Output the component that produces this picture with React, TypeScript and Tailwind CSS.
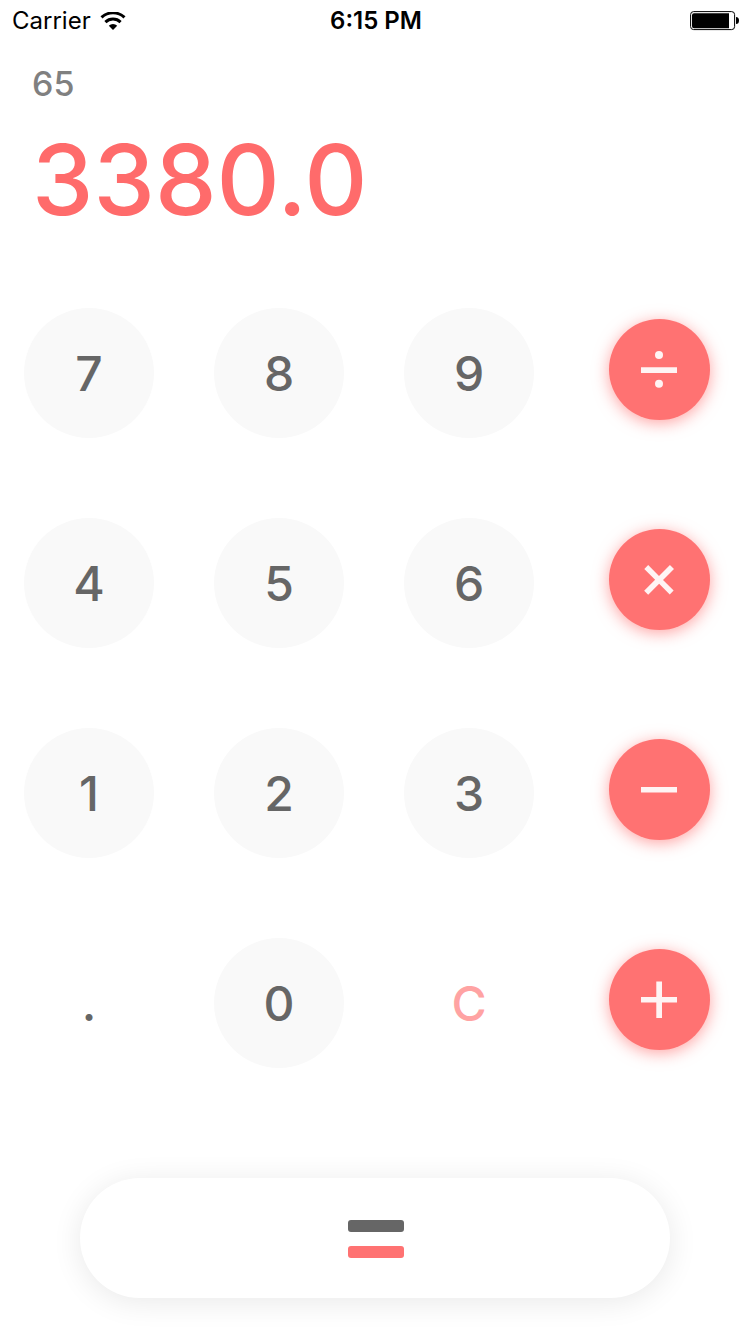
import type { ReactNode } from "react";

function Digit({ value }: { value: string }) {
  return (
    <button className="flex size-[130px] items-center justify-center rounded-full bg-[#f9f9f9] pt-0.5 text-5xl font-medium text-[#666]">
      {value}
    </button>
  );
}

function Operator({ label, children }: { label: string; children: ReactNode }) {
  return (
    <div className="flex justify-center pt-[11px]">
      <button
        aria-label={label}
        className="flex size-[101px] items-center justify-center rounded-full bg-[#ff7272] text-[#fff4f4] shadow-[0_3px_16px_rgba(255,114,114,0.65)]"
      >
        <svg className="size-10" viewBox="0 0 40 40" fill="currentColor" aria-hidden="true">
          {children}
        </svg>
      </button>
    </div>
  );
}

function StatusBar() {
  return (
    <header className="grid h-[42px] grid-cols-3 items-center pr-[10px] pl-3 text-2xl text-black">
      <div className="flex items-center gap-[9px]">
        <span>Carrier</span>
        <svg className="h-[18px] w-[26px]" viewBox="0 0 26 18" fill="none" stroke="currentColor" strokeWidth="3" aria-hidden="true">
          <path d="M1.5 5.4a16.8 16.8 0 0 1 23 0" />
          <path d="M5.4 10.1a11 11 0 0 1 15.2 0" />
          <path d="M13 18l-4.2-4.2a6 6 0 0 1 8.4 0z" fill="currentColor" stroke="none" />
        </svg>
      </div>
      <span className="text-center font-semibold">6:15 PM</span>
      <svg className="h-5 w-[50px] justify-self-end" viewBox="0 0 50 20" aria-hidden="true">
        <rect x=".6" y=".6" width="44" height="18" rx="3" fill="none" stroke="#000" />
        <path d="M4 2.2h35v15H4a2 2 0 0 1-2-2v-11a2 2 0 0 1 2-2z" />
        <path d="M46 6q3 0 3 3.5t-3 3.5z" />
      </svg>
    </header>
  );
}

export default function App() {
  return (
    <div className="min-h-screen bg-white pb-9 font-['Inter',sans-serif]">
      <StatusBar />
      <main>
        <section aria-label="Result" className="px-8 pt-[22px]">
          <p className="text-[34px] leading-10 font-medium text-[#808080]">65</p>
          <output className="mt-7 block text-[98px] leading-[96px] font-medium text-[#ff6b6b]">3380.0</output>
        </section>
        <section
          aria-label="Keypad"
          className="mt-20 grid grid-cols-[130px_130px_130px_130px] justify-between gap-y-20 pr-[26px] pl-6"
        >
          <Digit value="7" />
          <Digit value="8" />
          <Digit value="9" />
          <Operator label="Divide">
            <path d="M2 17.3h36V23H2z" />
            <circle cx="20" cy="5" r="4" />
            <circle cx="20" cy="33.8" r="4" />
          </Operator>
          <Digit value="4" />
          <Digit value="5" />
          <Digit value="6" />
          <Operator label="Multiply">
            <path d="M2 17h15.3V1.5H23V17h15v5.5H23V38h-5.7V22.5H2z" transform="rotate(45 20 19.7)" />
          </Operator>
          <Digit value="1" />
          <Digit value="2" />
          <Digit value="3" />
          <Operator label="Subtract">
            <path d="M2 17h36v5.6H2z" />
          </Operator>
          <button className="flex size-[130px] items-center justify-center rounded-full pt-0.5 text-5xl font-medium text-[#666]">.</button>
          <Digit value="0" />
          <button className="flex size-[130px] items-center justify-center rounded-full pt-0.5 text-5xl font-medium text-[#ffa3a3]">C</button>
          <Operator label="Add">
            <path d="M2 17h15.3V1.5H23V17h15v5.5H23V38h-5.7V22.5H2z" />
          </Operator>
        </section>
        <div className="mt-[110px] px-20">
          <button
            aria-label="Equals"
            className="flex h-[120px] w-full flex-col items-center justify-center gap-[14px] rounded-full bg-white pt-0.5 pl-0.5 shadow-[0_4px_30px_rgba(0,0,0,0.09)]"
          >
            <span className="h-3 w-14 rounded-[3px] bg-[#666]" />
            <span className="h-3 w-14 rounded-[3px] bg-[#ff7272]" />
          </button>
        </div>
      </main>
    </div>
  );
}
